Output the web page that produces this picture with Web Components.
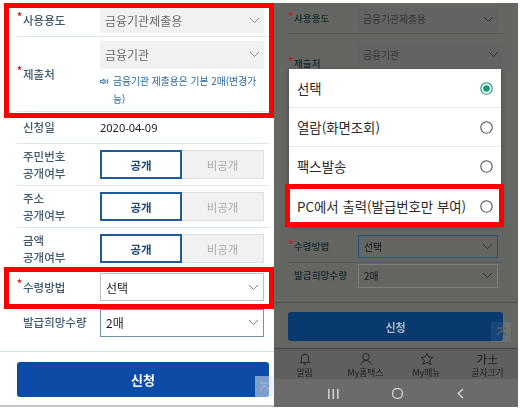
<!DOCTYPE html>
<html lang="ko">
<head>
<meta charset="utf-8">
<title>수령방법</title>
<style>
html, body { margin: 0; background: #fff; }
body {
  display: flex;
  align-items: flex-start;
  font-family: "Noto Sans CJK KR", "Noto Sans", sans-serif;
}
phone-screen.light {
  --label: #3f5a70; --line: #dde7ea; --sel-bg: #f1f1f1; --sel-text: #6a6a6a; --sel-border: #b4c2c8;
  --strong: #1c1c1c; --chev: #8a8a8a; --note: #2a6aa0; --cta: #0c4ca6; --fs-label: 11.5px; --fs-sel: 12px;
}
phone-screen.dim {
  --label: #17242e; --line: #555a58; --sel-bg: #626461; --sel-text: #333; --sel-border: #3e4240;
  --strong: #141414; --chev: #333; --note: #123a5c; --cta: #08396f; --fs-label: 9.6px; --fs-sel: 9.8px;
}
</style>
</head>
<body>

<phone-screen class="light" style="width:274px;height:405px;border-bottom:2px solid #c4c4c4">
  <form-row required h="37" pad="8 3"><span slot="label">사용용도</span><pick-box muted h="25">금융기관제출용</pick-box></form-row>
  <form-row required h="75" pad="3 3">
    <span slot="label">제출처</span>
    <pick-box muted h="28">금융기관</pick-box>
    <note-line>금융기관 제출용은 기본 2매(변경가<br>능)</note-line>
  </form-row>
  <form-row h="32" pad="0 0"><span slot="label">신청일</span><date-text>2020-04-09</date-text></form-row>
  <form-row h="42" pad="6 6"><span slot="label">주민번호<br>공개여부</span><open-toggle></open-toggle></form-row>
  <form-row h="42" pad="6 6"><span slot="label">주소<br>공개여부</span><open-toggle></open-toggle></form-row>
  <form-row h="42" pad="6 6"><span slot="label">금액<br>공개여부</span><open-toggle></open-toggle></form-row>
  <form-row required h="36" pad="3 4"><span slot="label">수령방법</span><pick-box h="28" bd="#b4c2c8">선택</pick-box></form-row>
  <form-row h="45" pad="3 14" last><span slot="label">발급희망수량</span><pick-box h="28" bd="#6f93a8">2매</pick-box></form-row>
  <apply-bar mt="10" mx="17" h="35" fs="13"></apply-bar>

  <top-jump slot="over" style="left:255px;top:376px;width:18px;height:21px;background:rgba(215,225,240,.55)"></top-jump>
  <red-box slot="over" style="left:4px;top:3px;width:260px;height:105px"></red-box>
  <red-box slot="over" style="left:4px;top:267px;width:260px;height:32px"></red-box>
</phone-screen>

<phone-screen class="dim" style="width:244px;height:404px;margin-top:3px;background:#646662">
  <div style="padding-left:14px;padding-right:15px">
    <form-row required h="31" pad="4 2" cols="70"><span slot="label">사용용도</span><pick-box muted h="24">금융기관제출용</pick-box></form-row>
    <form-row required h="60" pad="3 2" cols="70" noline>
      <span slot="label">제출처</span>
      <pick-box muted h="23">금융기관</pick-box>
      <note-line small>금융기관 제출용은 기본 2매(변경가</note-line>
    </form-row>
    <div style="height:139px"></div>
    <form-row required h="30" pad="2 4" cols="70"><span slot="label">수령방법</span><pick-box h="23" bd="#24517c">선택</pick-box></form-row>
    <form-row h="39" pad="1 14" cols="70" last><span slot="label">발급희망수량</span><pick-box h="24" bd="#7a7f7c">2매</pick-box></form-row>
  </div>
  <apply-bar mt="9" mx="14" h="29" fs="11" mb="7" line="#4c504e" dark></apply-bar>
  <tab-strip></tab-strip>
  <soft-keys></soft-keys>

  <choice-sheet slot="over" style="left:15px;top:66px;width:212px">
    <choice-item checked>선택</choice-item>
    <choice-item>열람(화면조회)</choice-item>
    <choice-item>팩스발송</choice-item>
    <choice-item last>PC에서 출력(발급번호만 부여)</choice-item>
  </choice-sheet>
  <top-jump slot="over" dark style="left:217px;top:319px;width:20px;height:20px;background:rgba(255,255,255,.07)"></top-jump>
  <red-box slot="over" style="left:11px;top:181px;width:209px;height:33px"></red-box>
</phone-screen>

<script>
const chevron = (color) => `<svg width="11" height="7" viewBox="0 0 11 7"><path d="M1 1l4.5 4.5L10 1" fill="none" stroke="${color}" stroke-width="1"/></svg>`

class PhoneScreen extends HTMLElement {
  constructor(){
    super()
    this.attachShadow({mode: 'open'})
    this.shadowRoot.innerHTML = `
    <style>
    :host { display: block; position: relative; flex: none; overflow: hidden; }
    .blur { filter: blur(.35px); height: 100%; }
    .over { position: absolute; inset: 0; }
    </style>
    <div class="blur"><slot></slot></div>
    <div class="over"><slot name="over"></slot></div>`
  }
}

class FormRow extends HTMLElement {
  constructor(){
    super()
    this.attachShadow({mode: 'open'})
  }
  connectedCallback(){
    let [top, bottom] = (this.getAttribute('pad') || '3 3').split(' ')
    let cols = this.getAttribute('cols') || '83'
    let nested = this.hasAttribute('cols')
    let noLine = this.hasAttribute('last') || this.hasAttribute('noline')
    this.shadowRoot.innerHTML = `
    <style>
    :host { display: block; margin: 0 ${nested ? 0 : 5}px 0 ${nested ? 0 : 17}px; }
    .row {
      display: grid;
      box-sizing: border-box;
      height: ${this.getAttribute('h')}px;
      grid-template-columns: ${cols}px 1fr;
      grid-template-rows: minmax(0, 1fr);
      align-items: center;
      padding: ${top}px 5px ${bottom}px 0;
      border-bottom: 1px solid ${noLine ? 'transparent' : 'var(--line)'};
    }
    .lab {
      display: flex;
      color: var(--label);
      font-size: var(--fs-label);
      line-height: 1.45;
      font-weight: 500;
      white-space: nowrap;
    }
    .star { flex: none; width: 6px; color: #d8161c; font-size: 10px; font-weight: 700; line-height: 1; margin-top: -1px; }
    </style>
    <div class="row">
      <div class="lab"><span class="star">${this.hasAttribute('required') ? '*' : ''}</span><span><slot name="label"></slot></span></div>
      <div><slot></slot></div>
    </div>`
  }
}

class PickBox extends HTMLElement {
  constructor(){
    super()
    this.attachShadow({mode: 'open'})
  }
  connectedCallback(){
    let muted = this.hasAttribute('muted')
    let h = this.getAttribute('h') || 28
    let bd = this.getAttribute('bd')
    this.shadowRoot.innerHTML = `
    <style>
    :host {
      display: flex;
      box-sizing: border-box;
      height: ${h}px;
      align-items: center;
      justify-content: space-between;
      padding: 0 4px 0 5px;
      font-size: var(--fs-sel);
      color: ${muted ? 'var(--sel-text)' : 'var(--strong)'};
      background: ${muted ? 'var(--sel-bg)' : 'transparent'};
      ${bd ? `border: 1px solid ${bd};` : ''}
    }
    svg { display: block; }
    </style>
    <span><slot></slot></span>${chevron('var(--chev)')}`
  }
}

class DateText extends HTMLElement {
  constructor(){
    super()
    this.attachShadow({mode: 'open'})
    this.shadowRoot.innerHTML = `
    <style>:host { display: block; font: 11px "Noto Sans", sans-serif; color: #1c1c1c; }</style>
    <slot></slot>`
  }
}

class NoteLine extends HTMLElement {
  constructor(){
    super()
    this.attachShadow({mode: 'open'})
  }
  connectedCallback(){
    let small = this.hasAttribute('small')
    this.shadowRoot.innerHTML = `
    <style>
    :host {
      display: flex;
      gap: 4px;
      margin-top: ${small ? 5 : 3}px;
      color: var(--note);
      font-size: ${small ? 9 : 9.8}px;
      line-height: ${small ? 14 : 18}px;
      white-space: nowrap;
    }
    svg { flex: none; margin-top: ${small ? 4 : 6}px; }
    </style>
    <svg width="9" height="7" viewBox="0 0 9 7" fill="none" stroke="currentColor">
      <path d="M.5 2.5h1.5l2-1.5v5l-2-1.5H.5z"/>
      <path d="M5.5 2.2q.8 1.3 0 2.6M7.2 1.2q1.5 2.3 0 4.6"/>
    </svg>
    <span><slot></slot></span>`
  }
}

class OpenToggle extends HTMLElement {
  constructor(){
    super()
    this.attachShadow({mode: 'open'})
    this.shadowRoot.innerHTML = `
    <style>
    :host { display: grid; grid-template-columns: 1fr 1fr; height: 29px; font-size: 11.5px; }
    div { display: flex; align-items: center; justify-content: center; box-sizing: border-box; }
    .on { border: 2px solid #1f5a96; color: #1b4670; font-weight: 700; background: #fff; }
    .off { border: 1px solid #dcdfde; border-left: 0; background: #f0f1f0; color: #ababab; }
    </style>
    <div class="on">공개</div><div class="off">비공개</div>`
  }
}

class ApplyBar extends HTMLElement {
  constructor(){
    super()
    this.attachShadow({mode: 'open'})
  }
  connectedCallback(){
    let attr = (k, d) => this.getAttribute(k) || d
    let dark = this.hasAttribute('dark')
    this.shadowRoot.innerHTML = `
    <style>
    :host {
      display: block;
      border-top: 1px solid ${attr('line', '#d3dde1')};
      padding: ${attr('mt', 10)}px ${dark ? 15 : 5}px ${attr('mb', 0)}px ${attr('mx', 17)}px;
    }
    button {
      display: block;
      width: 100%;
      height: ${attr('h', 35)}px;
      border: 0;
      border-radius: 3px;
      background: var(--cta);
      color: ${dark ? '#a9b6c4' : '#fff'};
      font: 700 ${attr('fs', 14)}px "Noto Sans CJK KR", sans-serif;
    }
    </style>
    <button>신청</button>`
  }
}

class TabStrip extends HTMLElement {
  constructor(){
    super()
    this.attachShadow({mode: 'open'})
    const stroke = 'fill="none" stroke="#181818" stroke-width="1.1"'
    const tabs = [
      [`<path d="M6 14.5V9.5a5 5 0 0 1 10 0v5l1.5 1.5h-13zM11 4.5V3M9.5 18h3" ${stroke}/>`, '알림'],
      [`<circle cx="11" cy="8" r="4.6" ${stroke}/><path d="M4 18.5q1-5.500 7-5.500t7 5.500" ${stroke}/>`, 'My홈택스'],
      [`<path d="M11 3l2.400 5.300 5.600.6-4.200 3.800 1.200 5.600-5-2.900-5 2.900 1.200-5.600L3 8.900l5.600-.6z" ${stroke}/>`, 'My메뉴']
    ]
    this.shadowRoot.innerHTML = `
    <style>
    :host {
      display: grid;
      grid-template-columns: repeat(4, 1fr);
      height: 31px;
      box-sizing: border-box;
      border-top: 1px solid #3f4240;
      background: #5f605e;
      color: #1a1a1a;
      font-size: 8.8px;
      line-height: 12px;
      text-align: center;
    }
    .tab { display: flex; flex-direction: column; align-items: center; padding-top: 2px; }
    svg { display: block; }
    .big { height: 16px; font-size: 11.5px; line-height: 16px; }
    </style>
    ${tabs.map(t => `<div class="tab"><svg width="16" height="16" viewBox="0 0 22 22">${t[0]}</svg><span>${t[1]}</span></div>`).join('')}
    <div class="tab"><span class="big">가±</span><span>글자크기</span></div>`
  }
}

class SoftKeys extends HTMLElement {
  constructor(){
    super()
    this.attachShadow({mode: 'open'})
    this.shadowRoot.innerHTML = `
    <style>
    :host {
      display: grid;
      grid-template-columns: 118px 11px 115px;
      height: 29px;
      align-items: center;
      justify-items: center;
      background: #6b6b6b;
    }
    svg { display: block; }
    </style>
    <svg width="11" height="10" viewBox="0 0 11 10" fill="#d0d0d0"><rect x="0" width="1.6" height="10"/><rect x="4.5" width="1.6" height="10"/><rect x="9" width="1.6" height="10"/></svg>
    <svg width="11" height="11" viewBox="0 0 11 11" fill="none" stroke="#d8d8d8" stroke-width="1.3"><rect x=".7" y=".7" width="9.6" height="9.6" rx="4"/></svg>
    <svg width="7" height="11" viewBox="0 0 7 11" fill="none" stroke="#d8d8d8" stroke-width="1.3"><path d="M6 1L1.200 5.500 6 10"/></svg>`
  }
}

class ChoiceSheet extends HTMLElement {
  constructor(){
    super()
    this.attachShadow({mode: 'open'})
    this.shadowRoot.innerHTML = `
    <style>
    :host { display: block; position: absolute; background: #fff; box-shadow: 0 1px 4px rgba(0,0,0,.3); }
    </style>
    <slot></slot>`
  }
}

class ChoiceItem extends HTMLElement {
  constructor(){
    super()
    this.attachShadow({mode: 'open'})
  }
  connectedCallback(){
    let checked = this.hasAttribute('checked')
    let last = this.hasAttribute('last')
    this.shadowRoot.innerHTML = `
    <style>
    :host {
      display: flex;
      align-items: center;
      justify-content: space-between;
      height: ${last ? 40 : 38}px;
      padding: 0 8px;
      border-bottom: ${last ? 0 : 1}px solid #e9e9e9;
      color: #2a2a2a;
      font-size: 13.4px;
      white-space: nowrap;
    }
    svg { display: block; flex: none; }
    </style>
    <span><slot></slot></span>
    <svg width="13" height="13" viewBox="0 0 13 13">
      <circle cx="6.5" cy="6.5" r="5.7" fill="none" stroke="${checked ? '#14997f' : '#555'}" stroke-width="1.1"/>
      ${checked ? '<circle cx="6.5" cy="6.5" r="3.3" fill="#14997f"/>' : ''}
    </svg>`
  }
}

class TopJump extends HTMLElement {
  constructor(){
    super()
    this.attachShadow({mode: 'open'})
  }
  connectedCallback(){
    let color = this.hasAttribute('dark') ? '#5a5f63' : '#9fb0c8'
    this.shadowRoot.innerHTML = `
    <style>
    :host { display: flex; position: absolute; align-items: center; justify-content: center; }
    svg { display: block; }
    </style>
    <svg width="11" height="10" viewBox="0 0 11 10" fill="none" stroke="${color}" stroke-width="1.3"><path d="M1 1h9M1 8l4.500-4.500L10 8"/></svg>`
  }
}

class RedBox extends HTMLElement {
  constructor(){
    super()
    this.attachShadow({mode: 'open'})
    this.shadowRoot.innerHTML = `<style>:host { display: block; position: absolute; border: 5px solid #f00; }</style>`
  }
}

window.customElements.define('phone-screen', PhoneScreen)
window.customElements.define('form-row', FormRow)
window.customElements.define('pick-box', PickBox)
window.customElements.define('date-text', DateText)
window.customElements.define('note-line', NoteLine)
window.customElements.define('open-toggle', OpenToggle)
window.customElements.define('apply-bar', ApplyBar)
window.customElements.define('tab-strip', TabStrip)
window.customElements.define('soft-keys', SoftKeys)
window.customElements.define('choice-sheet', ChoiceSheet)
window.customElements.define('choice-item', ChoiceItem)
window.customElements.define('top-jump', TopJump)
window.customElements.define('red-box', RedBox)
</script>
</body>
</html>
